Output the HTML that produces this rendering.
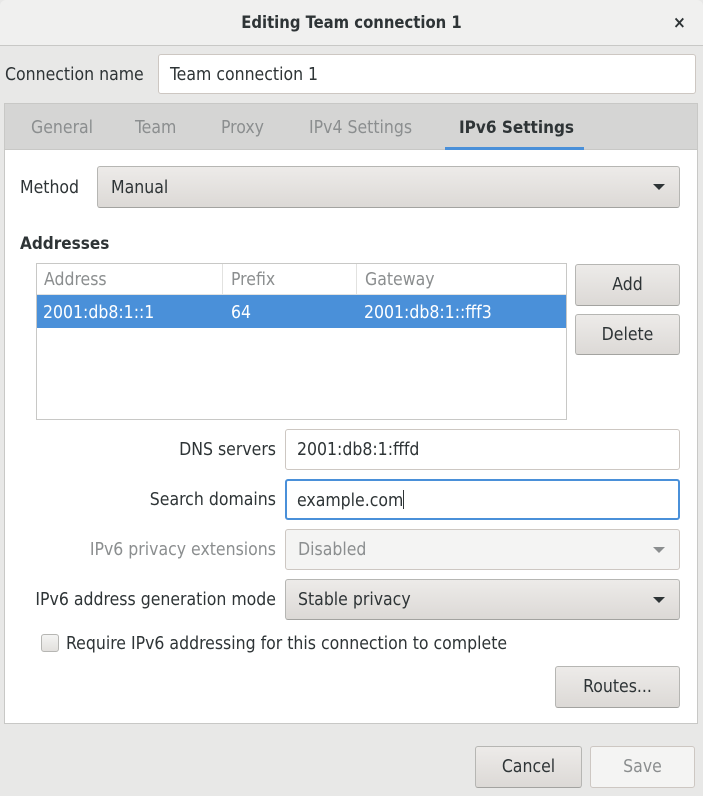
<!DOCTYPE html>
<html><head><meta charset="utf-8"><style>
*{box-sizing:border-box;margin:0;padding:0}
body{width:703px;height:796px;background:#e8e8e7;font-family:"DejaVu Sans","Liberation Sans",sans-serif;font-size:17.5px;color:#2e3436;position:relative;overflow:hidden;font-stretch:condensed}
.a{position:absolute}
.t{position:absolute;white-space:nowrap;line-height:20px;transform:translateY(1px)}
.entry{position:absolute;background:#fff;border:1px solid #cdc7c2;border-radius:3px}
.btn{position:absolute;background:linear-gradient(#edebe9,#dcd9d6);border:1px solid #b6b6b3;border-bottom-color:#a3a3a0;border-radius:3px;text-align:center;line-height:41px}
.arrow{position:absolute;width:0;height:0;border-left:6px solid transparent;border-right:6px solid transparent;border-top:6px solid #2e3436}
</style></head><body>
<div class="a" style="left:0;top:0;width:703px;height:46px;background:#f0f0ef;border-bottom:1px solid #c8c8c6;border-radius:6px 6px 0 0"></div>
<div class="t" style="left:0;width:703px;top:12px;text-align:center;font-weight:bold;font-size:16.5px">Editing Team connection 1</div>
<div class="t" style="left:673px;top:12px;font-weight:bold;font-size:17px">×</div>

<div class="t" style="left:5px;top:64px">Connection name</div>
<div class="entry" style="left:158px;top:54px;width:538px;height:40px"></div>
<div class="t" style="left:170px;top:64px">Team connection 1</div>

<div class="a" style="left:4px;top:103px;width:694px;height:621px;border:1px solid #c8c8c6;background:#fff"></div>
<div class="a" style="left:5px;top:104px;width:692px;height:46px;background:#d5d5d4;border-bottom:1px solid #c8c8c6"></div>
<div class="t" style="left:31px;top:117px;color:#8b8e8f">General</div>
<div class="t" style="left:135px;top:117px;color:#8b8e8f">Team</div>
<div class="t" style="left:221px;top:117px;color:#8b8e8f">Proxy</div>
<div class="t" style="left:309px;top:117px;color:#8b8e8f">IPv4 Settings</div>
<div class="t" style="left:459px;top:117px;font-weight:bold;font-size:17px">IPv6 Settings</div>
<div class="a" style="left:445px;top:147px;width:139px;height:3px;background:#4a90d9"></div>

<div class="t" style="left:20px;top:177px">Method</div>
<div class="btn" style="left:97px;top:166px;width:583px;height:42px"></div>
<div class="t" style="left:111px;top:177px">Manual</div>
<div class="arrow" style="left:653px;top:184px"></div>

<div class="t" style="left:20px;top:233px;font-weight:bold;font-size:17px">Addresses</div>
<div class="a" style="left:36px;top:263px;width:531px;height:157px;border:1px solid #c8c8c6;background:#fff"></div>
<div class="a" style="left:37px;top:294px;width:529px;height:1px;background:#e2e2e0"></div>
<div class="a" style="left:222px;top:264px;width:1px;height:30px;background:#e2e2e0"></div>
<div class="a" style="left:356px;top:264px;width:1px;height:30px;background:#e2e2e0"></div>
<div class="t" style="left:44px;top:269px;color:#8b8e8f">Address</div>
<div class="t" style="left:231px;top:269px;color:#8b8e8f">Prefix</div>
<div class="t" style="left:365px;top:269px;color:#8b8e8f">Gateway</div>
<div class="a" style="left:37px;top:295px;width:529px;height:33px;background:#4a90d9"></div>
<div class="t" style="left:43px;top:302px;color:#fff">2001:db8:1::1</div>
<div class="t" style="left:231px;top:302px;color:#fff">64</div>
<div class="t" style="left:364px;top:302px;color:#fff">2001:db8:1::fff3</div>
<div class="btn" style="left:575px;top:264px;width:105px;height:42px">Add</div>
<div class="btn" style="left:575px;top:314px;width:105px;height:41px">Delete</div>

<div class="t" style="left:0;width:276px;text-align:right;top:439px">DNS servers</div>
<div class="entry" style="left:285px;top:429px;width:395px;height:41px"></div>
<div class="t" style="left:297px;top:439px">2001:db8:1:fffd</div>
<div class="t" style="left:0;width:276px;text-align:right;top:489px">Search domains</div>
<div class="entry" style="left:285px;top:479px;width:395px;height:41px;border:2px solid #4a90d9"></div>
<div class="t" style="left:297px;top:489px">example.com<span style="display:inline-block;width:1px;height:19px;background:#2e3436;vertical-align:-3px"></span></div>
<div class="t" style="left:0;width:276px;text-align:right;top:539px;color:#8b8e8f">IPv6 privacy extensions</div>
<div class="a" style="left:285px;top:529px;width:395px;height:41px;border:1px solid #cdc7c2;border-radius:3px;background:#f4f4f3"></div>
<div class="t" style="left:298px;top:539px;color:#8b8e8f">Disabled</div>
<div class="arrow" style="left:653px;top:547px;border-top-color:#8b8e8f"></div>
<div class="t" style="left:0;width:276px;text-align:right;top:589px">IPv6 address generation mode</div>
<div class="btn" style="left:285px;top:579px;width:395px;height:41px"></div>
<div class="t" style="left:298px;top:589px">Stable privacy</div>
<div class="arrow" style="left:653px;top:597px"></div>

<div class="a" style="left:41px;top:634px;width:18px;height:18px;border:1px solid #b6b6b3;border-radius:3px;background:linear-gradient(#f4f4f3,#e2e0dd)"></div>
<div class="t" style="left:66px;top:633px">Require IPv6 addressing for this connection to complete</div>
<div class="btn" style="left:555px;top:666px;width:125px;height:42px">Routes...</div>

<div class="btn" style="left:475px;top:746px;width:107px;height:42px">Cancel</div>
<div class="a" style="left:590px;top:746px;width:105px;height:42px;border:1px solid #cdc7c2;border-radius:3px;background:#f4f4f3;text-align:center;line-height:41px;color:#8b8e8f">Save</div>
</body></html>
